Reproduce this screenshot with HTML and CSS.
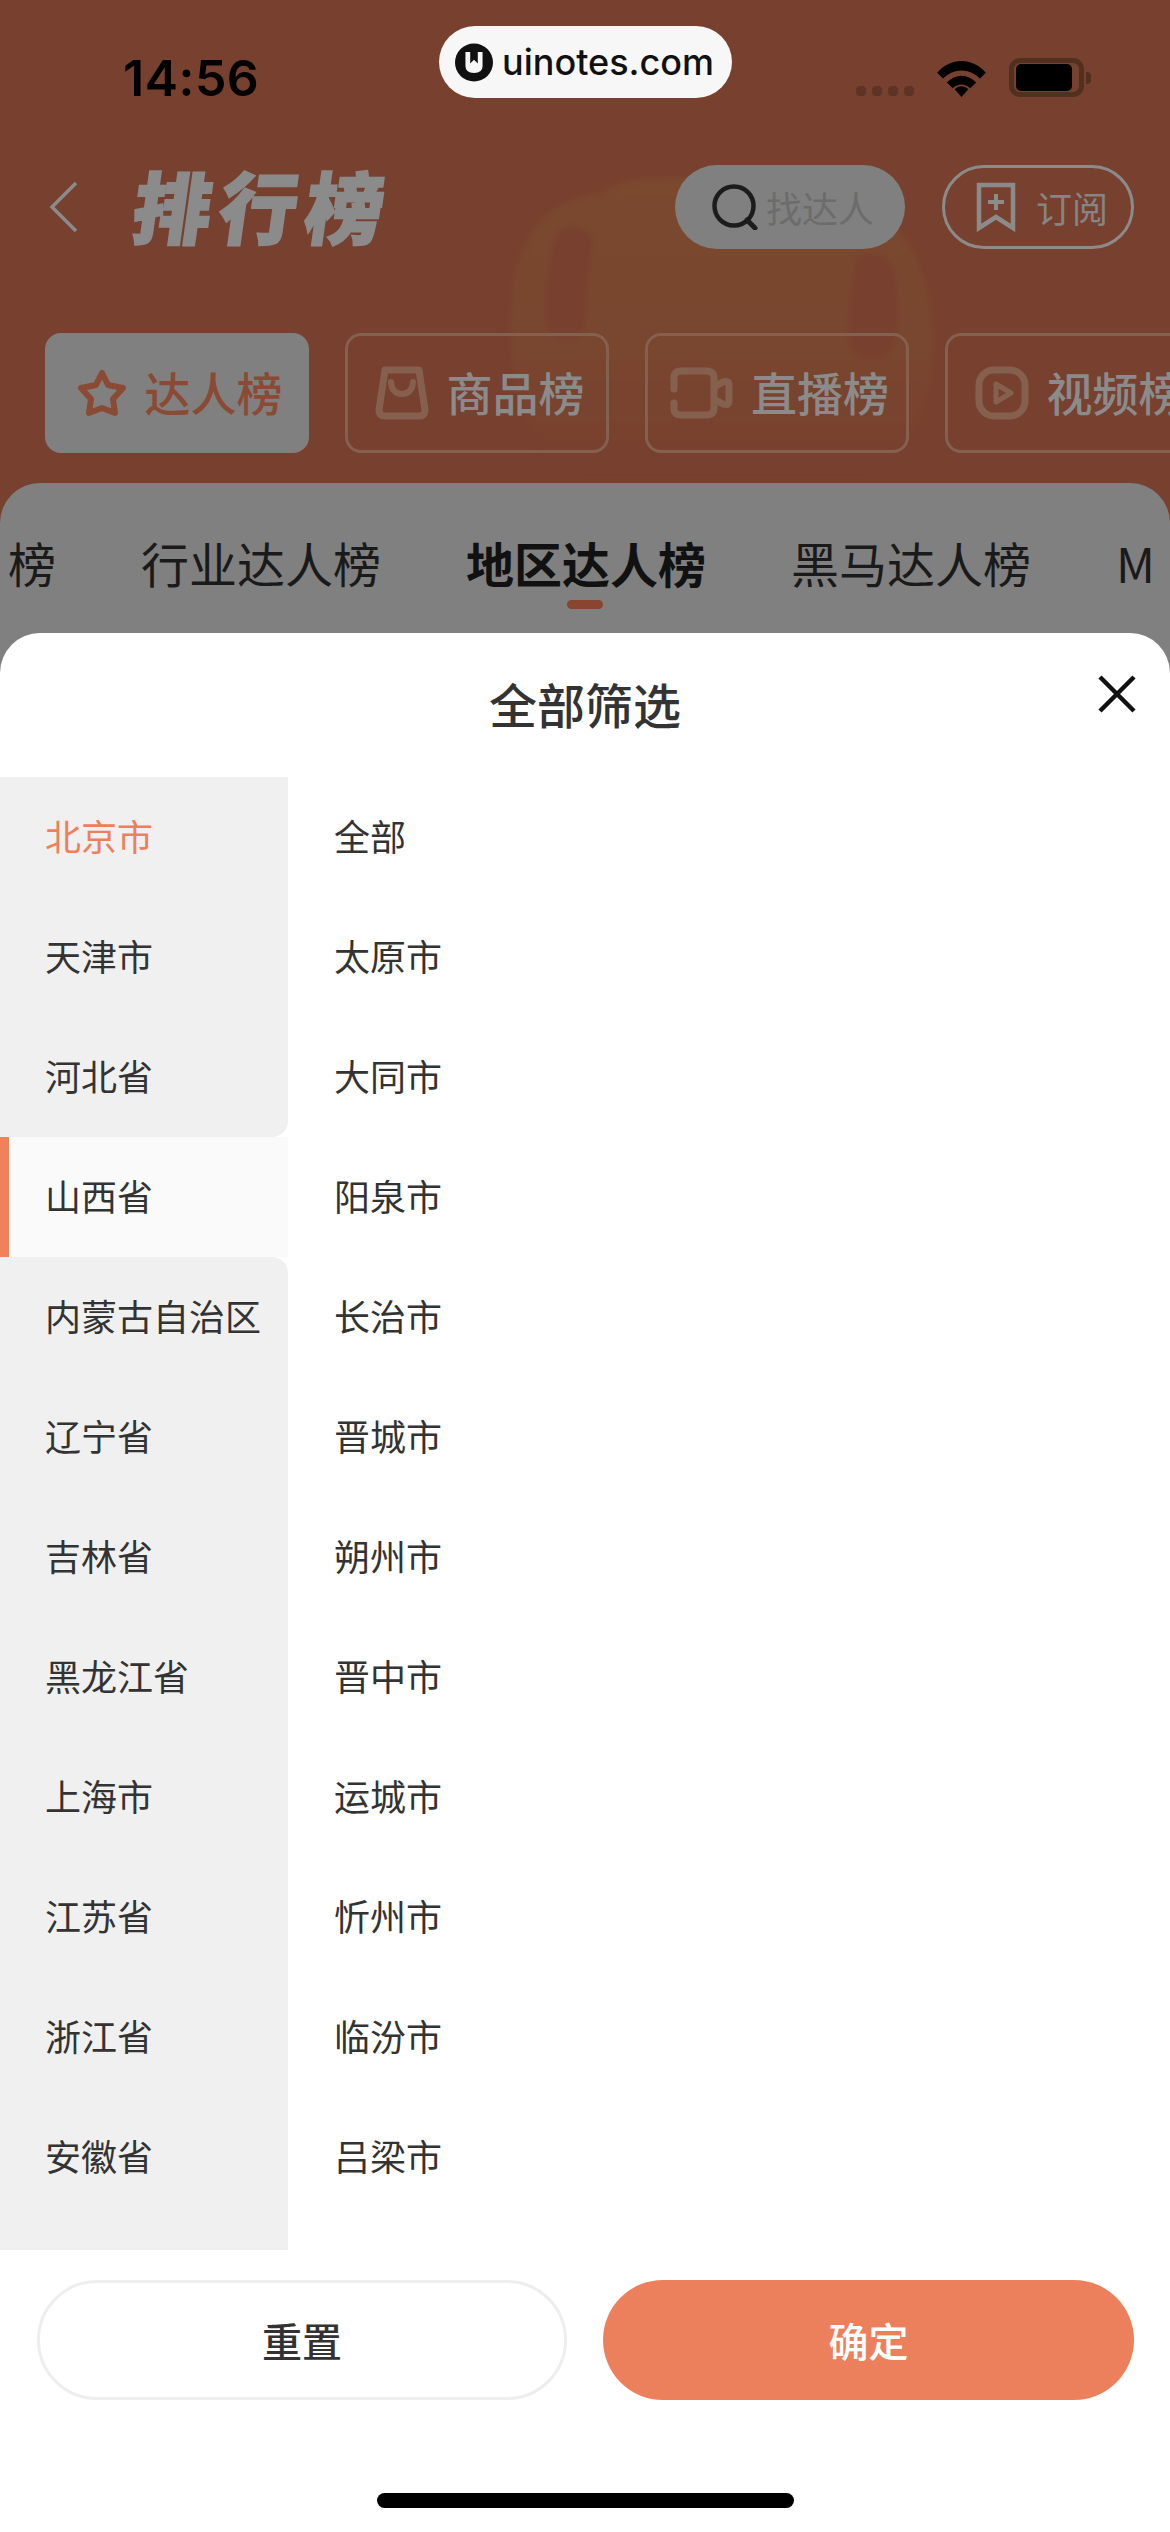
FILE: index.html
```html
<!DOCTYPE html>
<html lang="zh-CN">

<head>
    <meta charset="UTF-8">
    <meta name="viewport" content="width=device-width, initial-scale=1.0">
    <title>排行榜 全部筛选</title>
    <link rel="stylesheet" href="styles.css">
</head>

<body>
    <div id="page">
        <!-- Faint mug behind the header -->
        <svg class="mug" width="430" height="300" viewBox="0 0 430 300">
            <defs>
                <linearGradient id="mug-fade" x1="0" y1="0" x2="0" y2="1">
                    <stop offset="0" stop-color="#7a492e" />
                    <stop offset="0.6" stop-color="#79462f" />
                    <stop offset="1" stop-color="#78402f" />
                </linearGradient>
            </defs>
            <path d="M0 150 C0 70 30 22 90 18 C105 6 125 2 150 2 L300 2 C340 2 370 20 385 50 C412 80 424 120 424 170 C424 230 400 280 360 296 L60 296 C20 270 0 220 0 150 Z" fill="url(#mug-fade)" />
            <path d="M46 60 C36 90 32 130 38 152 C42 165 70 168 74 150 L83 62 C76 48 52 46 46 60 Z" fill="#78402f" />
            <path d="M346 84 C360 72 382 78 385 100 C390 130 388 160 380 176 C372 186 345 184 340 170 C338 140 340 110 346 84 Z" fill="#78402f" />
        </svg>

        <!-- Status bar -->
        <div id="status-bar">
            <span class="time">14:56</span>
            <div class="status-icons">
                <div class="signal"><i></i><i></i><i></i><i></i></div>
                <svg width="51" height="37" viewBox="0 0 52 38">
                    <path d="M1 13 C15 -3 37 -3 51 13 L45 19 C34 8 18 8 7 19 Z" fill="#000" />
                    <path d="M11 23 C20 14 32 14 41 23 L35 29 C29 24 23 24 17 29 Z" fill="#000" />
                    <path d="M19 30 C23 26 29 26 33 30 L26 38 Z" fill="#000" />
                </svg>
                <div class="battery"><div class="battery-fill"></div></div>
            </div>
        </div>

        <!-- Title row -->
        <div id="nav">
            <svg class="back" width="30" height="52" viewBox="0 0 30 52">
                <path d="M27 2 L3 26 L27 50" fill="none" stroke="#8b8b8b" stroke-width="3.5" />
            </svg>
            <h1 class="page-title">排行榜</h1>
            <div class="search-btn">
                <svg width="47" height="46" viewBox="0 0 47 46">
                    <circle cx="22" cy="22" r="19.5" fill="none" stroke="#1c1c1c" stroke-width="4.5" />
                    <path d="M35 36 L43 44" stroke="#1c1c1c" stroke-width="5" stroke-linecap="round" />
                </svg>
                <span>找达人</span>
            </div>
            <div class="sub-btn">
                <svg width="40" height="50" viewBox="0 0 40 50">
                    <path d="M3 3 H37 V46 L20 35 L3 46 Z" fill="none" stroke="#8b8b8b" stroke-width="4.5" />
                    <path d="M20 12 V28 M12 20 H28" stroke="#8b8b8b" stroke-width="4" />
                </svg>
                <span>订阅</span>
            </div>
        </div>

        <!-- Category tabs -->
        <div id="cat-tabs">
            <div class="cat-tab active">
                <svg width="50" height="48" viewBox="0 0 50 48">
                    <path d="M25 4 L31 16 L46 19 L36 30 L38 44 L25 39 L12 44 L14 30 L4 19 L19 16 Z" fill="none" stroke="#8a4a34" stroke-width="6" stroke-linejoin="round" />
                </svg>
                <span>达人榜</span>
            </div>
            <div class="cat-tab">
                <svg width="54" height="54" viewBox="0 0 54 54">
                    <path d="M10 4 H44 L50 44 Q50 50 44 50 H10 Q4 50 4 44 Z" fill="none" stroke="#85604f" stroke-width="7" stroke-linejoin="round" />
                    <path d="M16 16 C16 32 38 32 38 16" fill="none" stroke="#85604f" stroke-width="6" stroke-linecap="round" />
                </svg>
                <span>商品榜</span>
            </div>
            <div class="cat-tab">
                <svg width="63" height="52" viewBox="0 0 63 52">
                    <path d="M4 22 V11 Q4 4 11 4 H36 Q44 4 44 11 V41 Q44 48 36 48 H11 Q4 48 4 41 V36" fill="none" stroke="#85604f" stroke-width="7" stroke-linecap="round" />
                    <path d="M44 20 L53 15 Q59 13 59 18 V34 Q59 39 53 37 L44 32" fill="none" stroke="#85604f" stroke-width="7" />
                </svg>
                <span>直播榜</span>
            </div>
            <div class="cat-tab">
                <svg width="54" height="54" viewBox="0 0 54 54">
                    <rect x="4" y="4" width="46" height="46" rx="15" fill="none" stroke="#85604f" stroke-width="7" />
                    <path d="M21 18 L36 27 L21 36 Z" fill="none" stroke="#85604f" stroke-width="5" stroke-linejoin="round" />
                </svg>
                <span>视频榜</span>
            </div>
        </div>

        <!-- Ranking sub tabs, dimmed behind the sheet -->
        <div id="rank-panel">
            <div class="rank-tabs">
                <span class="rank-tab">榜</span>
                <span class="rank-tab">行业达人榜</span>
                <span class="rank-tab active">地区达人榜</span>
                <span class="rank-tab">黑马达人榜</span>
                <span class="rank-tab">M</span>
            </div>
        </div>

        <!-- Logo badge -->
        <div id="badge">
            <svg width="38" height="39" viewBox="0 0 40 40">
                <circle cx="20" cy="20" r="20" fill="#111" />
                <path d="M11 9 H16 V21 L20 17 L24 21 V9 H29 V24 Q29 31 20 31 Q11 31 11 24 Z" fill="#f7f7f7" />
            </svg>
            <span>uinotes.com</span>
        </div>

        <!-- Filter sheet -->
        <div id="filter-sheet">
            <div class="sheet-head">
                <h2 class="sheet-title">全部筛选</h2>
                <svg class="close" width="38" height="38" viewBox="0 0 38 38">
                    <path d="M2 2 L36 36 M36 2 L2 36" stroke="#111" stroke-width="4.5" />
                </svg>
            </div>
            <div class="sheet-body">
                <div class="province-list">
                    <div class="province selected">北京市</div>
                    <div class="province">天津市</div>
                    <div class="province before-current">河北省</div>
                    <div class="province current">山西省</div>
                    <div class="province after-current">内蒙古自治区</div>
                    <div class="province">辽宁省</div>
                    <div class="province">吉林省</div>
                    <div class="province">黑龙江省</div>
                    <div class="province">上海市</div>
                    <div class="province">江苏省</div>
                    <div class="province">浙江省</div>
                    <div class="province">安徽省</div>
                </div>
                <div class="city-list">
                    <div class="city">全部</div>
                    <div class="city">太原市</div>
                    <div class="city">大同市</div>
                    <div class="city">阳泉市</div>
                    <div class="city">长治市</div>
                    <div class="city">晋城市</div>
                    <div class="city">朔州市</div>
                    <div class="city">晋中市</div>
                    <div class="city">运城市</div>
                    <div class="city">忻州市</div>
                    <div class="city">临汾市</div>
                    <div class="city">吕梁市</div>
                </div>
            </div>
            <div class="sheet-actions">
                <button class="btn-reset">重置</button>
                <button class="btn-ok">确定</button>
            </div>
            <div class="home-bar"></div>
        </div>
    </div>
</body>

</html>
```

FILE: styles.css
```css
/* General reset */
* {
    margin: 0;
    padding: 0;
    box-sizing: border-box;
}

body {
    width: 1170px;
    height: 2532px;
    overflow: hidden;
    background: #78402f;
    font-family: "Noto Sans CJK SC", "Noto Sans", sans-serif;
}

#page {
    position: relative;
    width: 1170px;
    height: 2532px;
    overflow: hidden;
}

.mug {
    position: absolute;
    left: 510px;
    top: 176px;
    filter: blur(3px);
}

/* Status bar */
#status-bar {
    position: relative;
    display: flex;
    justify-content: space-between;
    align-items: flex-start;
    height: 165px;
    padding: 48px 86px 0 123px;
}

.time {
    font-family: Inter, sans-serif;
    font-size: 50px;
    line-height: 60px;
    font-weight: 600;
    letter-spacing: 0.5px;
    color: #000;
}

.status-icons {
    display: flex;
    align-items: flex-end;
    padding-top: 10px;
}

.signal {
    display: flex;
    gap: 6px;
    margin-right: 22px;
    margin-bottom: 1px;
}

.signal i {
    width: 10px;
    height: 10px;
    border-radius: 4px;
    background: #5c3325;
}

.battery {
    position: relative;
    width: 75px;
    height: 39px;
    margin-left: 22px;
    border: 5px solid #52301f;
    border-radius: 11px;
    padding: 1px 7px 1px 2px;
}

.battery::after {
    content: "";
    position: absolute;
    right: -12px;
    top: 9px;
    width: 5px;
    height: 12px;
    border-radius: 0 4px 4px 0;
    background: #52301f;
}

.battery-fill {
    width: 100%;
    height: 100%;
    border-radius: 5px;
    background: #000;
}

/* Title row */
#nav {
    position: relative;
    display: flex;
    align-items: center;
    height: 84px;
    padding-left: 49px;
}

.page-title {
    width: 254px;
    margin-left: 55px;
    padding-bottom: 6px;
    font-size: 78px;
    line-height: 84px;
    font-weight: 900;
    letter-spacing: 8px;
    color: #8b8b8b;
    white-space: nowrap;
    -webkit-text-stroke: 2px #8b8b8b;
    transform: skewX(-8deg);
}

.search-btn {
    display: flex;
    align-items: center;
    gap: 7px;
    width: 230px;
    height: 84px;
    margin-left: 287px;
    padding-left: 37px;
    border-radius: 42px;
    background: #808080;
    color: #6c6c6c;
    font-size: 36px;
}

.sub-btn {
    display: flex;
    align-items: center;
    gap: 20px;
    width: 192px;
    height: 84px;
    margin-left: 37px;
    padding-left: 31px;
    border: 3px solid #8b8b8b;
    border-radius: 42px;
    color: #858585;
    font-size: 36px;
}

/* Category tabs */
#cat-tabs {
    position: relative;
    display: flex;
    gap: 36px;
    margin-top: 84px;
    padding-left: 45px;
}

.cat-tab {
    display: flex;
    flex: none;
    align-items: center;
    justify-content: center;
    gap: 18px;
    width: 264px;
    height: 120px;
    padding-left: 5px;
    border: 3px solid #85604f;
    border-radius: 16px;
    color: #8b8b8b;
    font-size: 46px;
    font-weight: 500;
    white-space: nowrap;
}

.cat-tab span {
    margin-bottom: 5px;
}

.cat-tab.active {
    background: #808080;
    border-color: #808080;
    color: #8a4a34;
}

/* Ranking sub tabs */
#rank-panel {
    position: relative;
    height: 200px;
    margin-top: 30px;
    border-radius: 40px 40px 0 0;
    background: #808080;
    overflow: hidden;
}

.rank-tabs {
    display: flex;
    gap: 85px;
    padding: 43px 0 0 8px;
    white-space: nowrap;
}

.rank-tab {
    position: relative;
    font-size: 48px;
    line-height: 72px;
    color: #1a1a1a;
}

.rank-tab.active {
    font-weight: 600;
    color: #111;
}

.rank-tab.active::after {
    content: "";
    position: absolute;
    left: 101px;
    bottom: -11px;
    width: 36px;
    height: 9px;
    border-radius: 5px;
    background: #8a4530;
}

/* Logo badge sits over the status bar */
#badge {
    position: absolute;
    left: 439px;
    top: 26px;
    display: flex;
    align-items: center;
    gap: 9px;
    width: 293px;
    height: 72px;
    padding-left: 16px;
    border-radius: 36px;
    background: #f7f7f7;
    color: #111;
    font-family: Inter, sans-serif;
    font-size: 36px;
    font-weight: 500;
}

/* Filter sheet */
#filter-sheet {
    position: absolute;
    left: 0;
    top: 633px;
    width: 1170px;
    height: 1899px;
    border-radius: 40px 40px 0 0;
    background: #fff;
}

.sheet-head {
    position: relative;
    height: 144px;
    padding-top: 34px;
    text-align: center;
}

.sheet-title {
    font-size: 48px;
    line-height: 72px;
    font-weight: 500;
    color: #333;
}

.close {
    position: absolute;
    right: 34px;
    top: 42px;
}

.sheet-body {
    display: flex;
    height: 1473px;
}

.province-list {
    width: 288px;
}

.province,
.city {
    height: 120px;
    line-height: 117px;
    font-size: 36px;
    color: #333;
    white-space: nowrap;
}

.province {
    padding-left: 45px;
    background: #f0f0f0;
}

/* last row runs down to the end of the column */
.province:last-child {
    height: 153px;
}

.province.selected {
    color: #ee8059;
}

.province.before-current {
    border-bottom-right-radius: 16px;
}

.province.after-current {
    border-top-right-radius: 16px;
}

.province.current {
    background: #fafafa;
    border-left: 9px solid #f0815a;
    padding-left: 36px;
}

.city-list {
    flex: 1;
    padding-left: 46px;
}

.sheet-actions {
    display: flex;
    gap: 36px;
    padding: 30px 0 0 37px;
}

.sheet-actions button {
    flex: none;
    width: 530px;
    height: 120px;
    border-radius: 60px;
    font-family: inherit;
    font-size: 40px;
    font-weight: 500;
}

.btn-reset {
    background: #fff;
    border: 3px solid #eee;
    color: #333;
}

.sheet-actions .btn-ok {
    width: 531px;
    background: #ed805c;
    border: none;
    color: #fff;
}

.home-bar {
    width: 417px;
    height: 15px;
    margin: 93px auto 0;
    border-radius: 8px;
    background: #000;
}
```
